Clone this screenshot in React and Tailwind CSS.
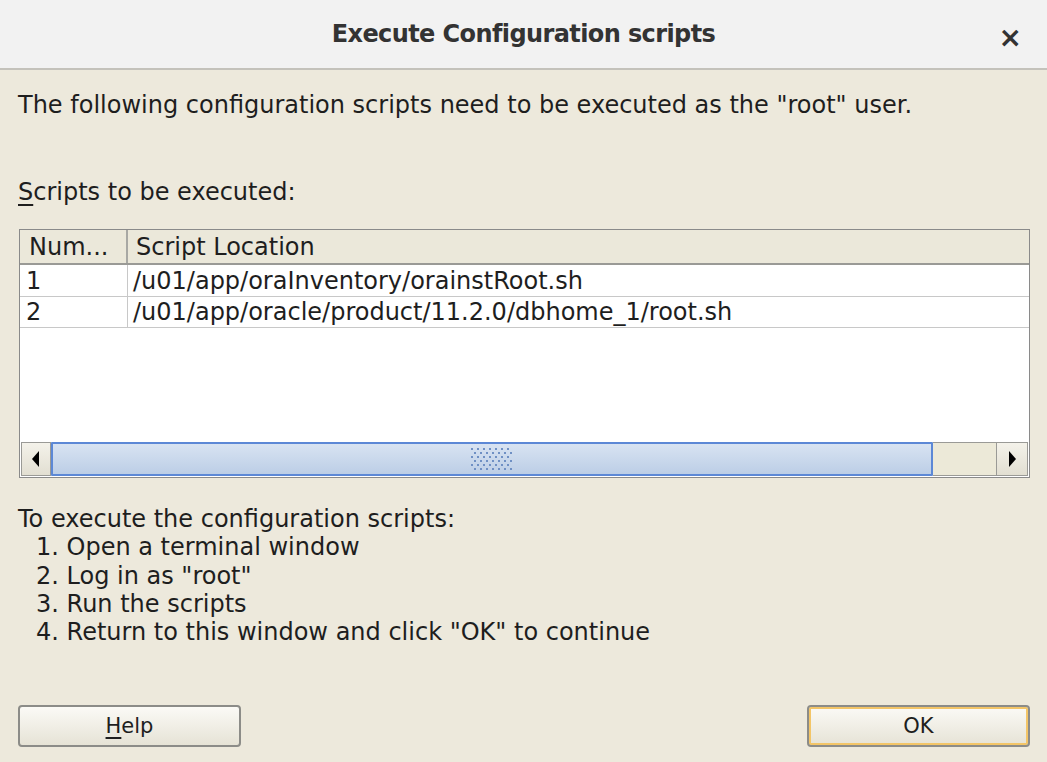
import React from "react";

const body = { fontFamily: '"DejaVu Sans", "Liberation Sans", sans-serif' };

function Grip() {
  const dots = [];
  for (let r = 0; r < 6; r++) {
    for (let c = 0; c < 7; c++) {
      const x = 3 + c * 6 + (r % 2 ? 3 : 0);
      const y = 2 + r * 4;
      dots.push(<rect key={`${r}-${c}`} x={x} y={y} width="2" height="2" fill="#6f90c4" />);
    }
  }
  return (
    <svg width="48" height="26" viewBox="0 0 48 26">
      {dots}
    </svg>
  );
}

export default function App() {
  return (
    <div className="w-[1047px] h-[762px] bg-[#ede9dc] flex flex-col text-[#1e1e1e] overflow-hidden" style={body}>
      {/* title bar */}
      <div className="h-[70px] bg-[#f2f2f2] border-b-2 border-[#c4c2bb] flex items-center relative shrink-0">
        <div className="flex-1 text-center text-[24px] font-bold text-[#333] tracking-[-0.6px]">
          Execute Configuration scripts
        </div>
        <div className="absolute right-[25px] top-[17px] text-[28px] font-bold text-[#333]">×</div>
      </div>

      <div className="px-[18px] flex flex-col flex-1">
        <div className="mt-[21px] text-[24px] leading-[28px]">
          The following configuration scripts need to be executed as the "root" user.
        </div>
        <div className="mt-[59px] text-[24px] leading-[28px]">
          <span className="underline underline-offset-4">S</span>cripts to be executed:
        </div>

        {/* table */}
        <div className="mt-[23px] ml-[1px] w-[1011px] h-[249px] border border-[#8a8a8a] bg-white flex flex-col">
          <div className="h-[35px] flex bg-[#ebe8da] border-b-2 border-[#9a9a96] text-[24px] leading-[28px]">
            <div className="w-[108px] px-[9px] flex items-center border-r-2 border-[#a8a8a4]">Num...</div>
            <div className="flex-1 px-[8px] flex items-center">Script Location</div>
          </div>
          <div className="h-[32px] flex border-b border-[#c8c8c8] text-[24px] leading-[28px]">
            <div className="w-[108px] px-[6px] flex items-center border-r border-[#c8c8c8]">1</div>
            <div className="flex-1 px-[5px] flex items-center">/u01/app/oraInventory/orainstRoot.sh</div>
          </div>
          <div className="h-[31px] flex border-b border-[#c8c8c8] text-[24px] leading-[28px]">
            <div className="w-[108px] px-[6px] flex items-center border-r border-[#c8c8c8]">2</div>
            <div className="flex-1 px-[5px] flex items-center">/u01/app/oracle/product/11.2.0/dbhome_1/root.sh</div>
          </div>
          <div className="flex-1" />
          {/* scrollbar */}
          <div className="h-[34px] mx-[1px] mb-[1px] flex bg-[#ece9d8]">
            <div className="w-[30px] border border-[#9a9a96] bg-gradient-to-b from-[#f4f2ea] to-[#e2dfd2] flex items-center justify-center">
              <svg width="10" height="16" viewBox="0 0 10 16"><path d="M8 0 L1 8 L8 16 Z" fill="#000" /></svg>
            </div>
            <div className="w-[882px] border-2 border-[#5c88d6] rounded-[1px] bg-gradient-to-b from-[#d8e3f2] to-[#bccee6] flex items-center justify-center">
              <Grip />
            </div>
            <div className="flex-1 border-y border-[#9a9a96] bg-[#ece9d8]" />
            <div className="w-[32px] border border-[#9a9a96] bg-gradient-to-b from-[#f4f2ea] to-[#e2dfd2] flex items-center justify-center">
              <svg width="10" height="16" viewBox="0 0 10 16"><path d="M2 0 L9 8 L2 16 Z" fill="#000" /></svg>
            </div>
          </div>
        </div>

        <div className="mt-[27px] text-[24px] leading-[28.25px]">
          <div>To execute the configuration scripts:</div>
          <div className="pl-[18px]">1. Open a terminal window</div>
          <div className="pl-[18px]">2. Log in as "root"</div>
          <div className="pl-[18px]">3. Run the scripts</div>
          <div className="pl-[18px]">4. Return to this window and click "OK" to continue</div>
        </div>

        <div className="mt-[59px] flex justify-between">
          <button className="w-[223px] h-[42px] rounded-[4px] border-2 border-[#8c8c88] bg-gradient-to-b from-[#fbfaf6] to-[#e6e3d6] text-[21px] text-[#1e1e1e]" style={body}>
            <span className="underline underline-offset-4">H</span>elp
          </button>
          <button className="w-[223px] h-[42px] mr-[-1px] rounded-[4px] border-2 border-[#8c8c88] bg-gradient-to-b from-[#fbfaf6] to-[#e6e3d6] shadow-[inset_0_0_0_2px_#f3c567] text-[21px] text-[#1e1e1e]" style={body}>
            OK
          </button>
        </div>
      </div>
    </div>
  );
}
